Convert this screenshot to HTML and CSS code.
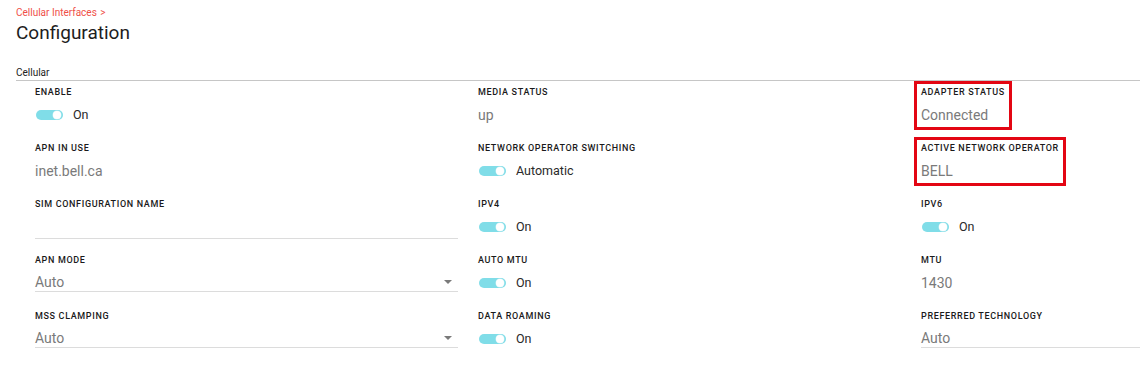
FILE: index.html
```html
<!DOCTYPE html>
<html lang="en">
<head>
<meta charset="utf-8">
<title>Configuration</title>
<link rel="stylesheet" href="styles.css">
</head>
<body>
<div class="page">
  <div class="crumb">Cellular Interfaces <span class="chev">&gt;</span></div>
  <h1 class="title">Configuration</h1>
  <div class="section-head">Cellular</div>
  <div class="grid">
    <div class="field">
      <div class="label">Enable</div>
      <div class="value toggle-row"><span class="toggle"><span class="thumb"></span></span><span class="toggle-text">On</span></div>
    </div>
    <div class="field">
      <div class="label">Media Status</div>
      <div class="value">up</div>
    </div>
    <div class="field marked">
      <div class="label">Adapter Status</div>
      <div class="value">Connected</div>
    </div>

    <div class="field">
      <div class="label">APN in use</div>
      <div class="value">inet.bell.ca</div>
    </div>
    <div class="field">
      <div class="label">Network Operator Switching</div>
      <div class="value toggle-row"><span class="toggle"><span class="thumb"></span></span><span class="toggle-text">Automatic</span></div>
    </div>
    <div class="field marked">
      <div class="label">Active Network Operator</div>
      <div class="value">BELL</div>
    </div>

    <div class="field">
      <div class="label">SIM Configuration Name</div>
      <div class="value text-input"></div>
    </div>
    <div class="field">
      <div class="label">IPv4</div>
      <div class="value toggle-row"><span class="toggle"><span class="thumb"></span></span><span class="toggle-text">On</span></div>
    </div>
    <div class="field">
      <div class="label">IPv6</div>
      <div class="value toggle-row"><span class="toggle"><span class="thumb"></span></span><span class="toggle-text">On</span></div>
    </div>

    <div class="field">
      <div class="label">APN Mode</div>
      <div class="value select">Auto<span class="arrow"></span></div>
    </div>
    <div class="field">
      <div class="label">Auto MTU</div>
      <div class="value toggle-row"><span class="toggle"><span class="thumb"></span></span><span class="toggle-text">On</span></div>
    </div>
    <div class="field">
      <div class="label">MTU</div>
      <div class="value">1430</div>
    </div>

    <div class="field">
      <div class="label">MSS Clamping</div>
      <div class="value select">Auto<span class="arrow"></span></div>
    </div>
    <div class="field">
      <div class="label">Data Roaming</div>
      <div class="value toggle-row"><span class="toggle"><span class="thumb"></span></span><span class="toggle-text">On</span></div>
    </div>
    <div class="field">
      <div class="label">Preferred Technology</div>
      <div class="value select">Auto</div>
    </div>
  </div>
</div>
</body>
</html>
```

FILE: styles.css
```css
html, body {
  margin: 0;
  padding: 0;
  background: #fff;
  overflow: hidden;
}
body {
  font-family: Roboto, "Liberation Sans", Arial, sans-serif;
  color: #222;
}
.page {
  padding-left: 16px;
}
.crumb {
  margin-top: 7px;
  font-size: 10px;
  line-height: 12px;
  color: #ef4f48;
}
.chev {
  margin-left: 1px;
}
.title {
  margin: 2px 0 0 0;
  font-size: 19px;
  line-height: 24px;
  font-weight: 400;
  color: #1d1d1d;
}
.section-head {
  margin-top: 22px;
  font-size: 10px;
  line-height: 12px;
  padding-bottom: 1px;
  border-bottom: 1px solid #c6c6c6;
  color: #222;
}
.grid {
  display: grid;
  grid-template-columns: 423px 423px 1fr;
  grid-auto-rows: 56px;
  column-gap: 20px;
  padding-top: 5px;
  margin-left: 19px;
}
.field {
  display: flex;
  flex-direction: column;
}
.label {
  font-size: 9px;
  line-height: 12px;
  font-weight: 500;
  letter-spacing: 0.65px;
  text-transform: uppercase;
  color: #1a1a1a;
  white-space: nowrap;
}
.value {
  margin-top: 7px;
  font-size: 14px;
  line-height: 20px;
  color: #7a7a7a;
}
.toggle-row {
  display: flex;
  align-items: center;
}
.toggle {
  position: relative;
  display: inline-block;
  width: 27px;
  height: 10px;
  margin-left: 1px;
  border-radius: 5px;
  background: #80dde8;
}
.thumb {
  position: absolute;
  right: 2px;
  top: 1px;
  width: 8px;
  height: 8px;
  border-radius: 50%;
  background: #fff;
  box-shadow: 0 0 0 0.5px #cfeff3;
}
.toggle-text {
  margin-left: 10px;
  font-size: 12.5px;
  color: #2a2a2a;
}
.text-input {
  height: 21px;
  border-bottom: 1px solid #dcdcdc;
}
.select {
  position: relative;
  line-height: 18px;
  height: 18px;
  border-bottom: 1px solid #dcdcdc;
}
.arrow {
  position: absolute;
  right: 6px;
  top: 7px;
  width: 0;
  height: 0;
  border-left: 4px solid transparent;
  border-right: 4px solid transparent;
  border-top: 4px solid #7a7a7a;
}
.marked {
  justify-self: start;
  margin: -5px 0 0 -7px;
  padding: 2px 4px 3px 4px;
  border: 3px solid #e30613;
  height: 38px;
}
```
